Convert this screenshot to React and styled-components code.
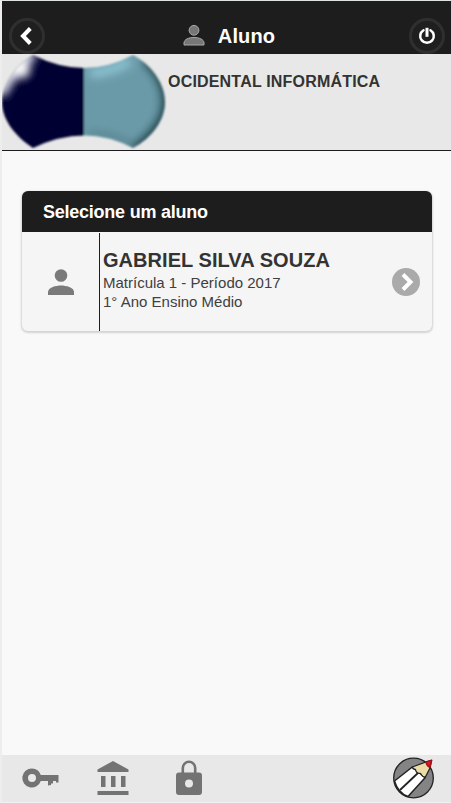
import React from "react";
import styled, { createGlobalStyle } from "styled-components";

const Global = createGlobalStyle`
  * { box-sizing: border-box; }
  body { margin: 0; background: #f9f9f9; font-family: "Liberation Sans", Arial, sans-serif; color: #333; }
`;
const Screen = styled.div`
  display: flex; flex-direction: column; height: 803px; width: 451px;
  border-top: 1px solid #dfe3e1; border-left: 2px solid #ededed; border-bottom: 1px solid #f1f1f1;
  background: #f9f9f9; overflow: hidden;
`;
const TopBar = styled.header`
  flex: none; height: 53px; padding: 17px 6px 0 7px; background: #1d1d1d;
  display: flex; justify-content: space-between; align-items: flex-start;
`;
const RoundButton = styled.button`
  width: 36px; height: 36px; padding: 0; border: 3px solid #2f2f2f; border-radius: 50%;
  background: #1f1f1f; display: flex; align-items: center; justify-content: center;
`;
const Title = styled.h1`
  margin: 0; height: 36px; display: flex; align-items: center; gap: 13px;
  color: #fff; font-size: 20px; line-height: 36px; padding-left: 4px; letter-spacing: 0.15px;
`;
const School = styled.section`
  flex: none; height: 97px; display: flex; background: #e8e8e8; border-bottom: 1px solid #1d1d1d;
`;
const SchoolName = styled.h2`
  margin: 18px 0 0 2px; font-size: 16px; line-height: 20px; white-space: nowrap; letter-spacing: 0.19px;
`;
const Main = styled.main`
  flex: 1; padding: 40px 19px 0 20px;
`;
const Card = styled.article`
  height: 140px; border-radius: 6px; overflow: hidden; background: #f5f5f5;
  box-shadow: 0 1px 2px 1px rgba(0,0,0,.15);
`;
const CardHeading = styled.h3`
  margin: 0; height: 41px; padding-left: 21px; background: #1d1d1d; color: #fff;
  font-size: 18px; line-height: 42px; letter-spacing: -0.24px;
`;
const Student = styled.div`
  display: flex; align-items: stretch; height: 99px; padding-top: 1px;
`;
const Avatar = styled.div`
  width: 78px; border-right: 1px solid #1d1d1d; display: flex; align-items: center; justify-content: center;
`;
const Details = styled.div`
  flex: 1; padding: 15px 0 0 3px; white-space: nowrap;
`;
const Name = styled.h4`
  margin: 0; font-size: 20px; line-height: 25px; letter-spacing: 0.05px;
`;
const Line = styled.p`
  margin: 0; color: #404040; font-size: 15px; line-height: 19px;
`;
const Go = styled.div`
  display: flex; align-items: center; padding-right: 12px;
`;
const Footer = styled.footer`
  flex: none; height: 47px; padding: 0 16px 2px 19px; background: #e8e8e8; display: flex;
  align-items: center; justify-content: space-between;
`;
const Tools = styled.nav`
  display: flex; align-items: center; gap: 38px;
`;
const Icon = styled.svg`
  display: block; flex: none; overflow: visible;
`;

const Logo = () => (
  <Icon width="164" height="96" viewBox="0 0 164 96">
    <defs>
      <clipPath id="shape"><path d="M31 1Q83 27 131 1C150 11 163 30 163 48C163 66 150 84 131 94Q83 69 31 94C14 83 0 66 0 48C0 30 14 11 31 1Z" /></clipPath>
      <filter id="soft" x="-20%" y="-20%" width="140%" height="140%"><feGaussianBlur stdDeviation="4.5" /></filter>
      <filter id="edge" x="-5%" y="-5%" width="110%" height="110%"><feGaussianBlur stdDeviation="0.9" /></filter>
    </defs>
    <g filter="url(#edge)">
      <g clipPath="url(#shape)">
        <path fill="#000033" d="M0 0h82v96H0z" />
        <path fill="#6b9aa8" d="M82 0h82v96H82z" />
        <g filter="url(#soft)">
          <path d="M88 19Q108 19 128 7" fill="none" stroke="#8fc6d6" strokeWidth="9" />
          <path d="M144 4C156 14 166 30 166 48C166 66 153 84 132 98" fill="none" stroke="#1d3c44" strokeWidth="12" />
          <path d="M86 80Q107 77 134 93" fill="none" stroke="#48717c" strokeWidth="3" />
          <path d="M-3 40Q4 20 30 -2" fill="none" stroke="#d9dbe7" strokeWidth="15" />
          <ellipse cx="20" cy="16" rx="8" ry="8" fill="#fff" />
        </g>
      </g>
    </g>
  </Icon>
);

export default function App() {
  return (
    <>
      <Global />
      <Screen>
        <TopBar>
          <RoundButton aria-label="Voltar">
            <Icon width="30" height="30" viewBox="0 0 30 30"><path d="M18.3 7.5L11 15l7.3 7.5" fill="none" stroke="#fff" strokeWidth="4" /></Icon>
          </RoundButton>
          <Title>
            <Icon width="22" height="22" viewBox="0 0 22 22" fill="#777" stroke="#aaa" strokeWidth="1">
              <circle cx="11" cy="5.3" r="4.9" />
              <path d="M1 20v-2C1 14.300 6 12.500 11 12.500s10 1.800 10 5.500v2Z" />
            </Icon>
            Aluno
          </Title>
          <RoundButton aria-label="Sair">
            <Icon width="30" height="30" viewBox="0 0 30 30" fill="none" stroke="#fff" strokeWidth="2.500">
              <path d="M11.500 9.200a6.800 6.800 0 1 0 7 0" strokeLinecap="round" /><path d="M15 6.800v9" strokeWidth="3" />
            </Icon>
          </RoundButton>
        </TopBar>
        <School><Logo /><SchoolName>OCIDENTAL INFORMÁTICA</SchoolName></School>
        <Main>
          <Card>
            <CardHeading>Selecione um aluno</CardHeading>
            <Student>
              <Avatar>
                <Icon width="26" height="26" viewBox="0 0 26 26" fill="#7a7a7a">
                  <circle cx="13" cy="6.500" r="6.300" /><path d="M0 26v-3C0 18.500 8 16.500 13 16.500s13 2 13 6.500v3Z" />
                </Icon>
              </Avatar>
              <Details>
                <Name>GABRIEL SILVA SOUZA</Name>
                <Line>Matrícula 1 - Período 2017</Line>
                <Line>1° Ano Ensino Médio</Line>
              </Details>
              <Go>
                <Icon width="28" height="28" viewBox="0 0 28 28"><circle cx="14" cy="14" r="14" fill="#aaa" /><path d="M11 6.500l7.500 7.500L11 21.500" fill="none" stroke="#fff" strokeWidth="4" /></Icon>
              </Go>
            </Student>
          </Card>
        </Main>
        <Footer>
          <Tools>
            <Icon width="38" height="22" viewBox="-1 0 38 22" fill="#737373">
              <path fillRule="evenodd" d="M10 1.500a9.500 9.500 0 0 1 8.800 6.500H36.500v7.500h-2.500v-1.500h-3v2.500h-2V18l-3 .5V14h-7.200A9.500 9.500 0 1 1 10 1.500Zm0 5.500a4 4 0 1 0 0 8a4 4 0 1 0 0-8Z" />
            </Icon>
            <Icon width="32" height="36" viewBox="0 0 32 36" fill="#737373">
              <path d="M.5 9.500L16 1l15.500 8.500V12H.5ZM4 16h4.500v11H4ZM14 16h4.500v11H14ZM24 16h4.500v11H24ZM.5 31h31v4H.5Z" />
            </Icon>
            <Icon width="40" height="36" viewBox="-2 0 40 36">
              <path d="M13.800 14V8a6.200 6.200 0 0 1 12.400 0v6" fill="none" stroke="#737373" strokeWidth="2.600" />
              <path fill="#737373" fillRule="evenodd" d="M10 12.500h20a3 3 0 0 1 3 3V32a3 3 0 0 1-3 3H10a3 3 0 0 1-3-3V15.500a3 3 0 0 1 3-3ZM20 19.500a4 4 0 1 0 0 8a4 4 0 1 0 0-8Z" />
            </Icon>
          </Tools>
          <Icon width="42" height="42" viewBox="0 -1 42 42" strokeLinejoin="round">
            <circle cx="20.500" cy="20" r="19.800" fill="#848484" stroke="#222" strokeWidth="1.300" />
            <path d="M1.500 23L19.300 9 32.300 19.500 15 38.500Q5 35 1.500 23Z" fill="#fff" stroke="#222" strokeWidth="1.500" />
            <path d="M7 32L25.500 14.500" stroke="#222" strokeWidth="1.800" />
            <path d="M19.300 9L33 4 38.500 2.500 37 10 32.300 19.200 Q29 18.800 27.500 15.500Q23 15.500 22.500 11.500Q20 11.500 19.300 9Z" fill="#ecdca8" stroke="#222" strokeWidth="1.300" />
            <path d="M33 4l5.800-1.800-2 7.300Q33.500 8 33 4Z" fill="#d81b24" stroke="#a51018" strokeWidth="1.300" />
          </Icon>
        </Footer>
      </Screen>
    </>
  );
}
